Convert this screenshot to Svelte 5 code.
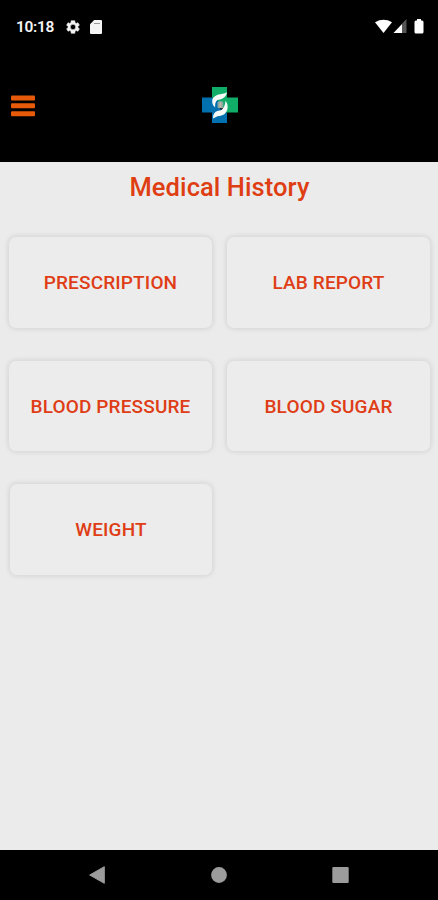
<script>
const records = ['Prescription', 'Lab Report', 'Blood Pressure', 'Blood Sugar', 'Weight'];

let selected = $state('');

//Marks the tapped record type
const openRecord = (record) => selected = record;
</script>

<div class="screen">
    <div class="status">
        <span class="time">10:18</span>
        <svg class="gear" width="16" height="16" viewBox="0 0 24 24">
            <path fill="#f4f4f4" stroke="#f4f4f4" stroke-width=".8" fill-rule="evenodd" d="M19.4 13a7.500 7.500 0 0 0 0-2l2.200-1.700-2.100-3.700-2.700 1a8 8 0 0 0-1.700-1L14.700 2.500H9.300L8.900 5.600a8 8 0 0 0-1.700 1l-2.700-1-2.100 3.700L4.600 11a7.500 7.500 0 0 0 0 2l-2.200 1.700 2.100 3.700 2.700-1a8 8 0 0 0 1.700 1l.4 3.100h5.400l.4-3.100a8 8 0 0 0 1.700-1l2.700 1 2.100-3.700zM12 16a4 4 0 1 1 0-8 4 4 0 0 1 0 8z"/>
        </svg>
        <svg class="card" width="12" height="14" viewBox="0 0 12 14">
            <path fill="#f4f4f4" d="M4.200 0H11Q12 0 12 1V13Q12 14 11 14H1Q0 14 0 13V4.200z"/>
            <path stroke="#999" stroke-width="1" d="M4 3.500H10"/>
        </svg>
        <svg class="signals" width="50" height="16" viewBox="0 0 50 16">
            <path fill="#fff" d="M0 3.200Q8.500-1.600 17 3.200L8.500 14z"/>
            <path fill="#555" d="M27 4.500L31.500 0V14H27z"/>
            <path fill="#fff" d="M18.500 14L27 5V14z"/>
            <path fill="#fff" d="M39.500 3Q39.500 1.500 41 1.500H42V0H46V1.500H47Q48.500 1.500 48.500 3V13Q48.500 14.500 47 14.500H41Q39.500 14.500 39.500 13z"/>
        </svg>
    </div>

    <header>
        <button class="menu" aria-label="Menu">
            <svg width="24" height="22" viewBox="0 0 24 22">
                <g fill="#e65a0a">
                    <rect y="0.500" width="24" height="5" rx="1"/>
                    <rect y="8.300" width="24" height="5" rx="1"/>
                    <rect y="16.200" width="24" height="5" rx="1"/>
                </g>
            </svg>
        </button>
        <svg class="logo" width="36" height="36" viewBox="0 0 36 36">
            <path fill="#0070ae" d="M0 10.500H18V22L25 25.500V36H10V25.500H0z"/>
            <path fill="#10ad68" d="M10 0H25V10.500H36V25.500H23L17 14 10 10.500z"/>
            <path fill="#f5faf8" d="M25 5.200C22.500 7.200 19 6.500 15.500 7.800C11.500 9.500 9.800 12 10.200 15C10.500 17.500 11.500 19 13.200 20.500C12.800 17 13.500 14.500 15.500 13C18.500 12.500 24 11.500 25 5.200z"/>
            <path fill="#f5faf8" d="M23.500 13.800C25.500 16.500 26.300 19.500 25.200 23C23.500 27.500 20 29 15.500 29.200L11 31.500C10.800 27.500 12.500 24.700 16 23.800C19.500 24 23 21 23.500 13.800z"/>
            <rect x="15.500" y="14.200" width="5.800" height="7" rx="1.500" fill="#8ca6a5"/>
            <path stroke="#c2b79e" stroke-width="2" d="M18.500 15.500V20.500"/>
        </svg>
    </header>

    <main>
        <h1>Medical History</h1>
        <div class="records">
            {#each records as record}
            <button class:selected={selected === record} onclick={() => openRecord(record)}>{record}</button>
            {/each}
        </div>
    </main>

    <nav>
        <svg width="16" height="18" viewBox="0 0 16 18"><path fill="#9c9c9c" stroke="#9c9c9c" stroke-linejoin="round" d="M.7 9L15.300.7V17.300z"/></svg>
        <svg width="16" height="16" viewBox="0 0 16 16"><circle cx="8" cy="8" r="7.900" fill="#9c9c9c"/></svg>
        <svg width="17" height="16" viewBox="0 0 17 16"><rect x=".3" width="16.400" height="16" rx="1" fill="#9c9c9c"/></svg>
    </nav>
</div>

<style>
:global(body) {margin: 0; background: #ebebeb;}

.screen {height: 900px; display: flex; flex-direction: column; font-family: Roboto, sans-serif; background: #ebebeb; overflow: hidden;}

button {border: none; padding: 0; background: none; font-family: inherit; cursor: pointer;}

svg {display: block; flex: none;}

.status {height: 54px; box-sizing: border-box; padding: 0 13px 0 16px; display: flex; align-items: center; background: #000; color: #f4f4f4;}

.time {width: 49px; font-size: 15.5px; font-weight: 600; letter-spacing: -0.3px; line-height: 18px; white-space: nowrap;}

.card {margin-left: 9px;}

.signals {margin-left: auto;}

header {height: 108px; box-sizing: border-box; padding: 0 10px 6px 11px; display: grid; grid-template-columns: 1fr 36px 1fr; align-items: center; background: #000;}

.menu {justify-self: start; padding-top: 1px;}

.logo {justify-self: center;}

main {flex: 1; padding: 0 8px 0 9px;}

h1 {margin: 0; padding-top: 10px; height: 65px; line-height: 30px; font-size: 25.5px; font-weight: 500; letter-spacing: 0.08px; text-align: center; color: #df3d12;}

.records {display: grid; grid-template-columns: 1fr 1fr; grid-auto-rows: 90.5px; gap: 33px 15px;}

.records button {padding-top: 1px; border-radius: 7px; box-shadow: 0 0 5px 1px rgba(0, 0, 0, 0.1); background: #ececec; color: #df3d16; font-size: 19px; font-weight: 500; letter-spacing: 0.15px; text-transform: uppercase; white-space: nowrap;}

.records button:last-child {margin-left: 1px;}

.records button.selected {background: #e2e2e2;}

nav {height: 50.5px; box-sizing: border-box; padding: 0 89px 0 89px; display: flex; justify-content: space-between; align-items: center; background: #000;}
</style>
